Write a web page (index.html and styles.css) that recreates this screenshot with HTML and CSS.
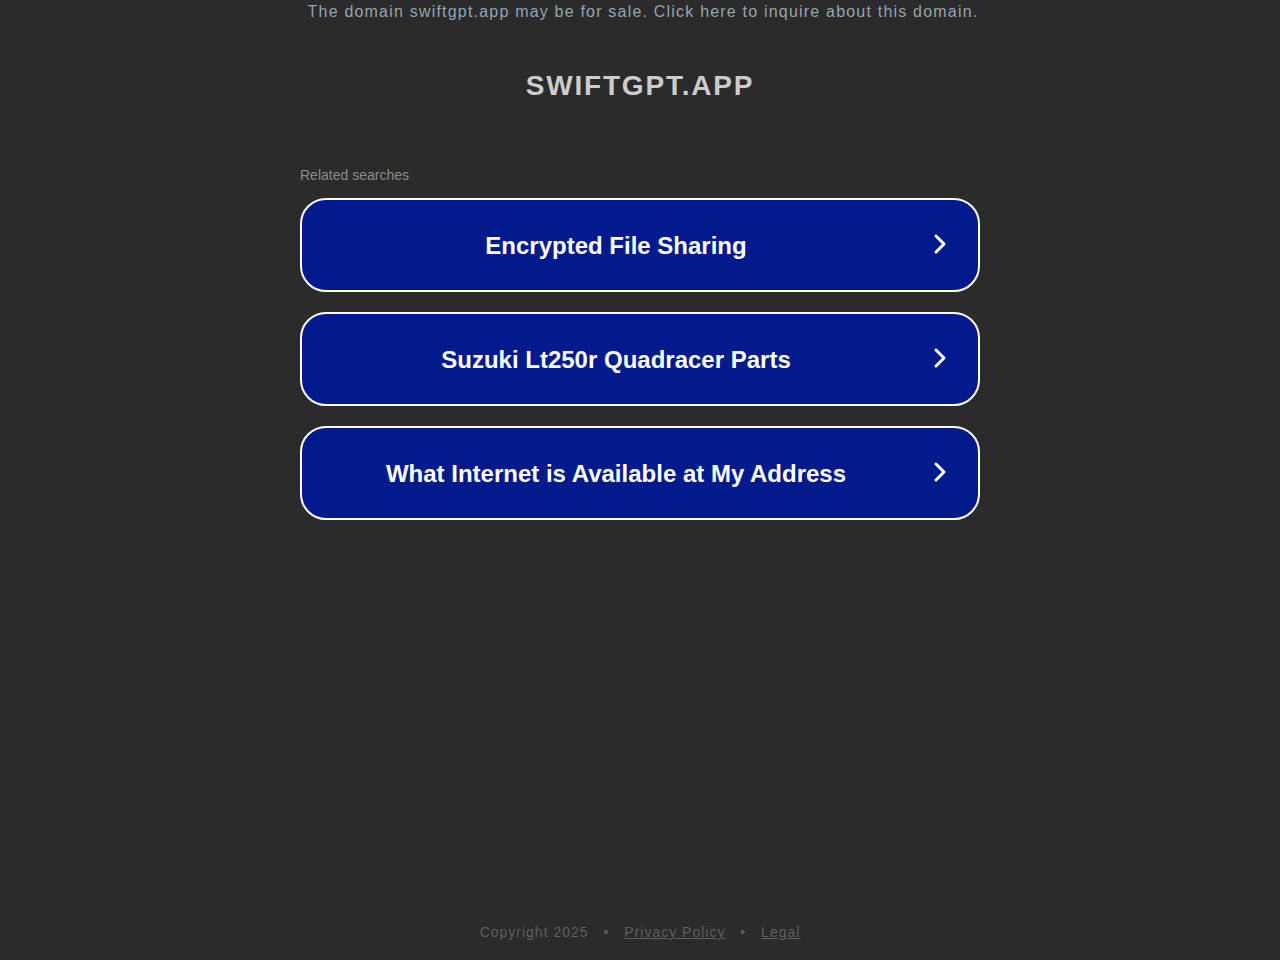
FILE: index.html
```html
<!DOCTYPE html>
<html>
<head>
<meta charset="utf-8">
<link rel="stylesheet" href="styles.css">
</head>
<body>
<div class="page">
  <div class="top">The domain swiftgpt.app may be for sale. Click here to inquire about this domain.</div>
  <h1 class="title">SWIFTGPT.APP</h1>
  <div class="related">
    <div class="label">Related searches</div>
    <a class="item"><span class="txt">Encrypted File Sharing</span><svg class="chev" viewBox="0 0 24 24"><path d="M8 4l8 8-8 8" fill="none" stroke="#fff" stroke-width="3" stroke-linecap="round" stroke-linejoin="round"/></svg></a>
    <a class="item"><span class="txt">Suzuki Lt250r Quadracer Parts</span><svg class="chev" viewBox="0 0 24 24"><path d="M8 4l8 8-8 8" fill="none" stroke="#fff" stroke-width="3" stroke-linecap="round" stroke-linejoin="round"/></svg></a>
    <a class="item"><span class="txt">What Internet is Available at My Address</span><svg class="chev" viewBox="0 0 24 24"><path d="M8 4l8 8-8 8" fill="none" stroke="#fff" stroke-width="3" stroke-linecap="round" stroke-linejoin="round"/></svg></a>
  </div>
  <div class="spacer"></div>
  <div class="footer">Copyright 2025 <span class="dot">•</span> <a class="flink">Privacy Policy</a> <span class="dot">•</span> <a class="flink">Legal</a></div>
</div>
</body>
</html>
```
FILE: styles.css
```css
html, body { margin: 0; padding: 0; background: #2b2b2b; }
body { font-family: "Liberation Sans", Arial, sans-serif; }
.page { height: 960px; display: flex; flex-direction: column; align-items: center; }
.top { margin-top: 2px; padding-left: 6px; font-size: 16px; letter-spacing: 1.2px; color: #93a4b2; line-height: 19px; }
.title { margin: 49px 0 0; font-size: 28px; font-weight: bold; color: #cccccc; letter-spacing: 1.8px; line-height: 32px; }
.related { width: 680px; margin-top: 65px; display: flex; flex-direction: column; gap: 20px; }
.label { font-size: 14px; color: #8c8c8c; line-height: 16px; margin-bottom: -5px; }
.item { box-sizing: border-box; height: 94px; border: 2px solid #fff; border-radius: 26px; background: #021a8b; display: flex; align-items: center; position: relative; }
.txt { flex: 1; text-align: center; font-size: 24px; font-weight: bold; color: #fff; padding-left: 32px; padding-right: 80px; padding-top: 2px; }
.chev { position: absolute; right: 26px; top: 50%; width: 24px; height: 24px; margin-top: -13px; }
.spacer { flex: 1; }
.footer { font-size: 14px; letter-spacing: 1px; color: #5f5f5f; margin-bottom: 20px; line-height: 16px; }
.dot { margin: 0 10px; }
.flink { color: #5f5f5f; text-decoration: underline; }
```
